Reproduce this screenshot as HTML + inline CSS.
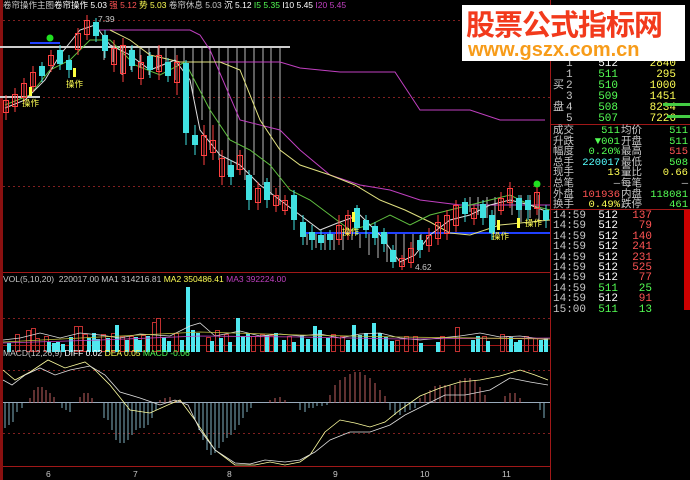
<!DOCTYPE html>
<html><head><meta charset="utf-8"><style>
body{margin:0;background:#000;width:690px;height:480px;overflow:hidden;font-family:"Liberation Mono","Noto Sans CJK SC",monospace;}
#w{position:relative;width:690px;height:480px;}
.t{position:absolute;font-size:11px;line-height:11px;white-space:pre;}
.hd{position:absolute;font-size:8.5px;line-height:9px;white-space:pre;font-family:"Liberation Sans","Noto Sans CJK SC",sans-serif;}
.r{text-align:right}
.c{color:#c8c8c8}.y{color:#ffff54}.g{color:#54ff54}.rd{color:#ff5454}.w{color:#fff}.cy{color:#54ffff}
#ban{position:absolute;left:462px;top:5px;width:223px;height:56px;background:#fff;}
#ban .a{position:absolute;left:4px;top:2px;font:bold 29px "Noto Sans CJK SC",sans-serif;color:#f23a1c;letter-spacing:-1px;line-height:32px;white-space:nowrap}
#ban .b{position:absolute;left:6px;top:34px;font:bold 20px "Liberation Sans",sans-serif;color:#f79c1a;line-height:22px;white-space:nowrap}
</style></head><body><div id="w">
<svg width="690" height="480" style="position:absolute;left:0;top:0">
<rect x="0" y="0" width="3" height="480" fill="#8a1010"/>
<line x1="550.5" y1="0" x2="550.5" y2="480" stroke="#a01818"/>
<line x1="3" y1="272.5" x2="550" y2="272.5" stroke="#a01818"/>
<line x1="3" y1="345.5" x2="550" y2="345.5" stroke="#a01818"/>
<line x1="3" y1="466.5" x2="550" y2="466.5" stroke="#a01818"/>
<line x1="551" y1="124.5" x2="690" y2="124.5" stroke="#a01818"/>
<line x1="551" y1="209.5" x2="690" y2="209.5" stroke="#a01818"/>
<rect x="684" y="210" width="6" height="100" fill="#c00"/>
<g stroke="#802020" stroke-dasharray="2,3">
<line x1="3" y1="97.5" x2="550" y2="97.5"/><line x1="3" y1="186.5" x2="550" y2="186.5"/>
<line x1="3" y1="318.5" x2="550" y2="318.5"/><line x1="3" y1="370.5" x2="550" y2="370.5"/><line x1="3" y1="433.5" x2="550" y2="433.5"/>
<line x1="3" y1="20.5" x2="460" y2="20.5"/>
</g>
<path stroke="#bbb" stroke-width="1" d="M104 47V60M113 47V62M122 47V75M131 47V70M140 47V68M149 47V75M158 47V70M166 47V72M175 47V80M184 47V62M193 47V95M202 47V120M210 47V150M219 47V160M228 47V175M237 47V170M245 47V180M254 47V175M263 47V185M271 47V195M280 47V205M307 233V245M316 233V248M325 233V250M334 233V250M343 233V250M352 233V240M360 233V248M369 233V255M378 233V258M387 233V262M396 233V262M404 233V265M413 233V255M421 233V245M470 197V212M478 197V215M487 197V218M495 197V225M512 195V215M521 195V222M530 195V218M539 195V220"/>
<line x1="0" y1="47" x2="290" y2="47" stroke="#ccc" stroke-width="2"/>
<line x1="0" y1="97" x2="40" y2="97" stroke="#ccc" stroke-width="2"/>
<line x1="300" y1="233" x2="550" y2="233" stroke="#2040ff" stroke-width="2"/>
<line x1="30" y1="43" x2="60" y2="43" stroke="#2040ff" stroke-width="2"/>
<path fill="none" stroke="#c040c0" d="M95 30H190L200 35 210 50 240 120 280 130 300 150 330 175 360 185 390 190 420 200 460 205 550 205"/>
<path fill="none" stroke="#c040c0" d="M190 62H280L300 68 340 72 395 72 420 110 470 110 500 120 545 120"/>
<path fill="none" stroke="#e0e080" d="M110 30 130 40 150 55 180 62 220 62 240 70 260 120 280 150 300 165 330 175 355 185 380 200 405 210 430 222 450 233 470 235 500 225 550 220"/>
<path fill="none" stroke="#60c040" d="M5 105 30 95 50 70 70 60 90 40 110 40 135 65 160 75 185 62 210 110 230 140 250 150 270 165 290 190 310 200 330 215 350 230 370 225 390 215 410 225 430 215 450 210 470 205 490 200 510 195 530 205 550 210"/>
<path fill="none" stroke="#ddd" d="M5 108 25 100 45 80 60 55 80 30 95 25 110 45 130 55 150 70 175 60 190 80 200 130 220 155 240 165 260 185 280 200 300 215 320 230 340 222 360 215 380 235 400 262 415 255 430 235 450 220 470 215 490 205 510 200 530 205 548 212"/>
<g>
<path stroke="#ff4040" d="M6 95V120M15 88V112M24 78V102M33 66V92M51 50V72M78 28V55M87 15V40M114 40V72M123 38V82M141 55V85M159 45V80M177 55V95M204 125V165M213 125V160M222 150V185M240 150V175M258 182V210M276 188V212M285 195V215M339 215V245M348 210V240M402 255V270M411 242V268M429 228V252M438 215V245M447 210V240M456 200V232M474 205V225M501 192V215M510 182V208M537 185V215"/>
<path stroke="#40e0e0" d="M42 62V82M60 45V70M69 55V78M96 18V42M105 30V58M132 45V72M150 52V78M168 58V82M186 60V145M195 125V155M231 160V185M249 170V210M267 178V208M294 190V230M303 215V245M312 225V250M321 230V250M330 230V250M357 205V235M366 215V238M375 222V245M384 228V252M393 245V268M420 235V258M465 198V222M483 200V225M492 210V240M519 195V218M528 195V220M546 205V228"/>
<g fill="none" stroke="#ff4040">
<rect x="3.5" y="100.5" width="5" height="12"/><rect x="12.5" y="94.5" width="5" height="12"/><rect x="21.5" y="83.5" width="5" height="14"/><rect x="30.5" y="72.5" width="5" height="14"/><rect x="48.5" y="55.5" width="5" height="10"/><rect x="75.5" y="33.5" width="5" height="16"/><rect x="84.5" y="20.5" width="5" height="14"/><rect x="111.5" y="48.5" width="5" height="16"/><rect x="120.5" y="45.5" width="5" height="28"/><rect x="138.5" y="62.5" width="5" height="16"/><rect x="156.5" y="55.5" width="5" height="16"/><rect x="174.5" y="62.5" width="5" height="20"/><rect x="201.5" y="135.5" width="5" height="20"/><rect x="210.5" y="140.5" width="5" height="12"/><rect x="219.5" y="158.5" width="5" height="18"/><rect x="237.5" y="155.5" width="5" height="14"/><rect x="255.5" y="188.5" width="5" height="14"/><rect x="273.5" y="195.5" width="5" height="10"/><rect x="282.5" y="200.5" width="5" height="10"/><rect x="336.5" y="225.5" width="5" height="14"/><rect x="345.5" y="215.5" width="5" height="18"/><rect x="399.5" y="258.5" width="5" height="8"/><rect x="408.5" y="248.5" width="5" height="14"/><rect x="426.5" y="235.5" width="5" height="10"/><rect x="435.5" y="222.5" width="5" height="16"/><rect x="444.5" y="215.5" width="5" height="18"/><rect x="453.5" y="205.5" width="5" height="20"/><rect x="471.5" y="208.5" width="5" height="10"/><rect x="498.5" y="198.5" width="5" height="12"/><rect x="507.5" y="188.5" width="5" height="14"/><rect x="534.5" y="192.5" width="5" height="16"/>
</g>
<g fill="#40e0e0">
<rect x="39" y="66" width="6" height="10"/><rect x="57" y="50" width="6" height="14"/><rect x="66" y="60" width="6" height="10"/><rect x="93" y="22" width="6" height="14"/><rect x="102" y="35" width="6" height="16"/><rect x="129" y="50" width="6" height="16"/><rect x="147" y="56" width="6" height="14"/><rect x="165" y="62" width="6" height="14"/><rect x="183" y="63" width="6" height="70"/><rect x="192" y="135" width="6" height="10"/><rect x="228" y="165" width="6" height="12"/><rect x="246" y="175" width="6" height="25"/><rect x="264" y="182" width="6" height="18"/><rect x="291" y="195" width="6" height="25"/><rect x="300" y="222" width="6" height="15"/><rect x="309" y="232" width="6" height="8"/><rect x="318" y="235" width="6" height="8"/><rect x="327" y="234" width="6" height="6"/><rect x="354" y="208" width="6" height="20"/><rect x="363" y="220" width="6" height="10"/><rect x="372" y="226" width="6" height="12"/><rect x="381" y="232" width="6" height="12"/><rect x="390" y="250" width="6" height="12"/><rect x="417" y="240" width="6" height="10"/><rect x="462" y="202" width="6" height="12"/><rect x="480" y="204" width="6" height="14"/><rect x="489" y="215" width="6" height="18"/><rect x="516" y="198" width="6" height="12"/><rect x="525" y="200" width="6" height="10"/><rect x="543" y="210" width="6" height="10"/>
</g>
</g>
<circle cx="50" cy="38" r="3.5" fill="#20e020"/><circle cx="537" cy="184" r="3.5" fill="#20e020"/>
<g fill="#ffff40"><rect x="29" y="87" width="3" height="9"/><rect x="73" y="68" width="3" height="9"/><rect x="352" y="212" width="3" height="10"/><rect x="497" y="220" width="3" height="10"/><rect x="517" y="218" width="3" height="10"/></g>
<g fill="none" stroke="#c03030">
<rect x="15.5" y="334.5" width="4" height="17"/><rect x="26.5" y="330.5" width="4" height="21"/><rect x="31.5" y="328.5" width="4" height="23"/><rect x="35.5" y="338.5" width="4" height="13"/><rect x="44.5" y="336.5" width="4" height="15"/><rect x="74.5" y="326.5" width="4" height="25"/><rect x="78.5" y="326.5" width="4" height="25"/><rect x="83.5" y="334.5" width="4" height="17"/><rect x="101.5" y="334.5" width="4" height="17"/><rect x="111.5" y="333.5" width="4" height="18"/><rect x="120.5" y="336.5" width="4" height="15"/><rect x="129.5" y="336.5" width="4" height="15"/><rect x="141.5" y="335.5" width="4" height="16"/><rect x="152.5" y="322.5" width="4" height="29"/><rect x="156.5" y="318.5" width="4" height="33"/><rect x="174.5" y="333.5" width="4" height="18"/><rect x="206.5" y="337.5" width="4" height="14"/><rect x="215.5" y="330.5" width="4" height="21"/><rect x="224.5" y="334.5" width="4" height="17"/><rect x="251.5" y="336.5" width="4" height="15"/><rect x="260.5" y="334.5" width="4" height="17"/><rect x="269.5" y="335.5" width="4" height="16"/><rect x="287.5" y="336.5" width="4" height="15"/><rect x="331.5" y="334.5" width="4" height="17"/><rect x="340.5" y="336.5" width="4" height="15"/><rect x="395.5" y="340.5" width="4" height="11"/><rect x="404.5" y="336.5" width="4" height="15"/><rect x="413.5" y="336.5" width="4" height="15"/><rect x="440.5" y="336.5" width="4" height="15"/><rect x="455.5" y="327.5" width="4" height="24"/><rect x="482.5" y="336.5" width="4" height="15"/><rect x="500.5" y="334.5" width="4" height="17"/><rect x="506.5" y="336.5" width="4" height="15"/><rect x="524.5" y="336.5" width="4" height="15"/><rect x="533.5" y="338.5" width="4" height="13"/>
</g>
<g fill="#50e8f0">
<rect x="7" y="343" width="4" height="9"/><rect x="47" y="342" width="4" height="10"/><rect x="52" y="343" width="4" height="9"/><rect x="56" y="342" width="4" height="10"/><rect x="61" y="344" width="4" height="8"/><rect x="69" y="337" width="4" height="15"/><rect x="87" y="338" width="4" height="14"/><rect x="92" y="333" width="4" height="19"/><rect x="96" y="339" width="4" height="13"/><rect x="106" y="338" width="4" height="14"/><rect x="115" y="325" width="4" height="27"/><rect x="125" y="340" width="4" height="12"/><rect x="134" y="337" width="4" height="15"/><rect x="138" y="340" width="4" height="12"/><rect x="146" y="336" width="4" height="16"/><rect x="162" y="337" width="4" height="15"/><rect x="167" y="341" width="4" height="11"/><rect x="180" y="340" width="4" height="12"/><rect x="186" y="287" width="4" height="65"/><rect x="191" y="330" width="4" height="22"/><rect x="196" y="333" width="4" height="19"/><rect x="210" y="341" width="4" height="11"/><rect x="219" y="338" width="4" height="14"/><rect x="228" y="342" width="4" height="10"/><rect x="236" y="318" width="4" height="34"/><rect x="241" y="336" width="4" height="16"/><rect x="246" y="333" width="4" height="19"/><rect x="265" y="335" width="4" height="17"/><rect x="274" y="333" width="4" height="19"/><rect x="282" y="340" width="4" height="12"/><rect x="292" y="342" width="4" height="10"/><rect x="300" y="335" width="4" height="17"/><rect x="306" y="339" width="4" height="13"/><rect x="313" y="326" width="4" height="26"/><rect x="318" y="330" width="4" height="22"/><rect x="326" y="338" width="4" height="14"/><rect x="346" y="340" width="4" height="12"/><rect x="352" y="325" width="4" height="27"/><rect x="358" y="335" width="4" height="17"/><rect x="364" y="333" width="4" height="19"/><rect x="372" y="323" width="4" height="29"/><rect x="378" y="333" width="4" height="19"/><rect x="384" y="337" width="4" height="15"/><rect x="390" y="341" width="4" height="11"/><rect x="419" y="343" width="4" height="9"/><rect x="436" y="342" width="4" height="10"/><rect x="471" y="340" width="4" height="12"/><rect x="476" y="336" width="4" height="16"/><rect x="486" y="341" width="4" height="11"/><rect x="509" y="337" width="4" height="15"/><rect x="514" y="342" width="4" height="10"/><rect x="518" y="340" width="4" height="12"/><rect x="539" y="340" width="4" height="12"/><rect x="544" y="338" width="4" height="14"/>
</g>
<path fill="none" stroke="#ddd" stroke-width="0.8" d="M3 340 20 338 40 333 60 338 80 333 100 335 120 338 140 334 170 336 190 326 200 323 215 336 240 331 260 336 280 334 300 336 320 334 340 338 360 334 380 333 400 338 420 340 440 338 460 336 480 333 500 337 520 336 548 340"/>
<path fill="none" stroke="#c040c0" stroke-width="0.8" d="M3 343 100 340 200 336 300 337 400 339 550 338"/>
<path fill="none" stroke="#c0c040" stroke-width="0.8" d="M3 342 100 337 200 332 300 335 400 337 550 339"/>
<line x1="3" y1="402.5" x2="550" y2="402.5" stroke="#9ab" />
<path stroke="#80b0c0" d="M5 403V428M9 403V425M13 403V422M17 403V412M22 403V408M62 403V408M66 403V410M70 403V412M104 403V418M108 403V420M112 403V430M116 403V440M120 403V443M124 403V443M128 403V440M132 403V435M136 403V430M140 403V428M144 403V428M148 403V425M152 403V418M156 403V410M195 403V420M199 403V430M203 403V440M207 403V450M211 403V455M215 403V453M219 403V448M223 403V442M227 403V438M231 403V435M235 403V430M239 403V425M243 403V418M247 403V412M251 403V408M300 403V410M305 403V412M309 403V408M313 403V408M317 403V406M322 403V406M327 403V405M390 403V410M395 403V415M400 403V415M405 403V412M410 403V410M415 403V408M540 403V410M544 403V418"/>
<path stroke="#c06060" d="M30 403V398M34 403V390M38 403V387M42 403V387M46 403V390M50 403V393M54 403V397M80 403V397M84 403V393M88 403V393M92 403V398M160 403V400M165 403V398M170 403V397M175 403V400M180 403V400M270 403V400M275 403V398M280 403V397M285 403V400M330 403V395M335 403V385M340 403V380M345 403V377M350 403V374M355 403V372M360 403V372M365 403V375M370 403V378M375 403V383M380 403V390M385 403V396M420 403V398M425 403V394M430 403V390M435 403V386M440 403V385M445 403V385M450 403V385M455 403V385M460 403V380M465 403V378M470 403V378M475 403V380M480 403V387M485 403V395M505 403V396M510 403V393M515 403V393M520 403V398"/>
<path fill="none" stroke="#ffffa0" stroke-width="0.8" d="M3 370 15 380 30 372 48 360 65 368 85 362 95 370 110 385 130 410 150 413 170 404 180 400 195 420 215 450 235 465 255 465 270 462 285 465 300 462 310 455 325 432 340 420 355 423 370 427 385 422 400 410 420 396 440 388 460 382 480 380 500 376 520 370 535 375 548 380"/>
<path fill="none" stroke="#e0e0e0" stroke-width="0.8" d="M3 380 12 385 25 375 40 368 55 375 70 370 90 366 105 375 120 392 140 398 160 405 175 400 188 405 200 430 215 450 235 463 250 464 265 460 285 462 300 460 315 452 330 440 350 432 370 432 390 425 405 415 425 405 445 395 465 395 490 390 510 378 530 382 548 385"/>
</svg>
<div class="hd" style="left:3px;top:1px"><span class="c">卷帘操作主图</span><span class="w">卷帘操作 5.03</span> <span class="rd">强 5.12</span> <span class="y">势 5.03</span> <span class="c">卷帘休息 5.03</span> <span class="w">沉 5.12</span> <span class="g">I5 5.35</span> <span class="w">I10 5.45</span> <span style="color:#c040c0">I20 5.45</span></div>
<div class="hd c" style="left:98px;top:15px">7.39</div>
<div class="hd c" style="left:415px;top:263px">4.62</div>
<div class="hd y" style="left:22px;top:99px">操作</div><div class="hd y" style="left:66px;top:80px">操作</div>
<div class="hd y" style="left:342px;top:228px">操作</div><div class="hd y" style="left:492px;top:232px">操作</div><div class="hd y" style="left:525px;top:219px">操作</div>
<div class="hd" style="left:3px;top:275px"><span class="c">VOL(5,10,20)</span>  <span class="c">220017.00 MA1 314216.81</span> <span class="y">MA2 350486.41</span> <span style="color:#c040c0">MA3 392224.00</span></div>
<div class="hd" style="left:3px;top:349px"><span class="c">MACD(12,26,9)</span> <span class="w">DIFF 0.02</span> <span class="y">DEA 0.05</span> <span class="g">MACD -0.06</span></div>
<div class="hd c" style="left:46px;top:470px">6</div><div class="hd c" style="left:133px;top:470px">7</div><div class="hd c" style="left:227px;top:470px">8</div><div class="hd c" style="left:333px;top:470px">9</div><div class="hd c" style="left:420px;top:470px">10</div><div class="hd c" style="left:502px;top:470px">11</div>
<div class="t c" style="left:566px;top:59px">1</div><div class="t w r" style="left:580px;top:59px;width:38px">512</div><div class="t y r" style="left:620px;top:59px;width:56px">2840</div>
<div class="t c" style="left:566px;top:70px">1</div><div class="t g r" style="left:580px;top:70px;width:38px">511</div><div class="t y r" style="left:620px;top:70px;width:56px">295</div>
<div class="t c" style="left:566px;top:81px">2</div><div class="t g r" style="left:580px;top:81px;width:38px">510</div><div class="t y r" style="left:620px;top:81px;width:56px">1000</div>
<div class="t c" style="left:566px;top:92px">3</div><div class="t g r" style="left:580px;top:92px;width:38px">509</div><div class="t y r" style="left:620px;top:92px;width:56px">1451</div>
<div class="t c" style="left:566px;top:103px">4</div><div class="t g r" style="left:580px;top:103px;width:38px">508</div><div class="t y r" style="left:620px;top:103px;width:56px">8234</div>
<div class="t c" style="left:566px;top:114px">5</div><div class="t g r" style="left:580px;top:114px;width:38px">507</div><div class="t y r" style="left:620px;top:114px;width:56px">7226</div>
<div class="t c" style="left:553px;top:81px">买</div><div class="t c" style="left:553px;top:103px">盘</div>
<div style="position:absolute;left:663px;top:103px;width:27px;height:3px;background:#4c4"></div><div style="position:absolute;left:667px;top:115px;width:23px;height:3px;background:#4c4"></div>
<div class="t c" style="left:553px;top:126px;line-height:10.6px;font-size:10.5px">成交<br>升跌<br>幅度<br>总手<br>现手<br>总笔<br>外盘<br>换手</div>
<div class="t c" style="left:621px;top:126px;line-height:10.6px;font-size:10.5px">均价<br>开盘<br>最高<br>最低<br>量比<br>每笔<br>内盘<br>跌停</div>
<div class="t r" style="left:558px;top:126px;width:62px;line-height:10.6px;font-size:10.5px"><span class="g">511</span><br><span class="g">▼001</span><br><span class="g">0.20%</span><br><span class="cy">220017</span><br><span class="y">13</span><br><span class="c">—</span><br><span class="rd">101936</span><br><span class="y">0.49%</span></div>
<div class="t r" style="left:640px;top:126px;width:48px;line-height:10.6px;font-size:10.5px"><span class="g">511</span><br><span class="g">511</span><br><span class="rd">515</span><br><span class="g">508</span><br><span class="y">0.66</span><br><span class="c">—</span><br><span class="g">118081</span><br><span class="g">461</span></div>
<div class="t c" style="left:553px;top:211px;line-height:10.4px">14:59<br>14:59<br>14:59<br>14:59<br>14:59<br>14:59<br>14:59<br>14:59<br>14:59<br>15:00</div>
<div class="t r" style="left:590px;top:211px;width:28px;line-height:10.4px"><span class="w">512</span><br><span class="w">512</span><br><span class="w">512</span><br><span class="w">512</span><br><span class="w">512</span><br><span class="w">512</span><br><span class="w">512</span><br><span class="g">511</span><br><span class="w">512</span><br><span class="g">511</span></div>
<div class="t r" style="left:620px;top:211px;width:32px;line-height:10.4px"><span class="rd">137</span><br><span class="rd">79</span><br><span class="rd">140</span><br><span class="rd">241</span><br><span class="rd">231</span><br><span class="rd">525</span><br><span class="rd">77</span><br><span class="g">25</span><br><span class="rd">91</span><br><span class="g">13</span></div>
<div id="ban"><div class="a">股票公式指标网</div><div class="b">www.gszx.com.cn</div></div>
</div></body></html>
